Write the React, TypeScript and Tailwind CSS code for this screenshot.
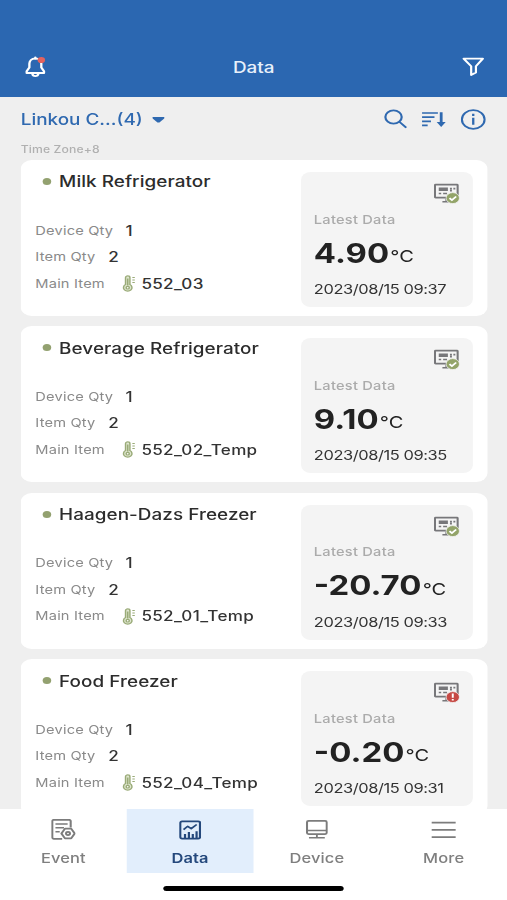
import React from 'react';

interface Location {
  name: string;
  deviceQty: number;
  itemQty: number;
  mainItem: string;
  value: string;
  time: string;
  status: 'ok' | 'alert';
}

const locations: Location[] = [
  { name: 'Milk Refrigerator', deviceQty: 1, itemQty: 2, mainItem: '552_03', value: '4.90', time: '2023/08/15 09:37', status: 'ok' },
  { name: 'Beverage Refrigerator', deviceQty: 1, itemQty: 2, mainItem: '552_02_Temp', value: '9.10', time: '2023/08/15 09:35', status: 'ok' },
  { name: 'Haagen-Dazs Freezer', deviceQty: 1, itemQty: 2, mainItem: '552_01_Temp', value: '-20.70', time: '2023/08/15 09:33', status: 'ok' },
  { name: 'Food Freezer', deviceQty: 1, itemQty: 2, mainItem: '552_04_Temp', value: '-0.20', time: '2023/08/15 09:31', status: 'alert' },
];

const BellIcon = () => (
  <svg width="18" height="22" viewBox="0 0 18 22" fill="none" stroke="#fff" strokeWidth="1.9" strokeLinecap="round" strokeLinejoin="round">
    <path d="M9 2.5c-3.2 0-4.9 2.3-4.9 5.2v3.8L1.9 15.2v1.8h14.2v-1.8l-2.2-3.7V7.7C13.9 4.8 12.2 2.5 9 2.5Z" />
    <path d="M9 1.5v1M6.5 17.6c.2 1.6 1.2 2.5 2.5 2.5s2.3-.9 2.5-2.5" />
    <circle cx="13.9" cy="4" r="3.1" fill="#e2625f" stroke="none" />
  </svg>
);

const FilterIcon = () => (
  <svg width="19" height="20" viewBox="0 0 19 20" fill="none" stroke="#fff" strokeWidth="1.8" strokeLinejoin="round">
    <path d="M1.4 1.6h15.8l-5.7 7.7v6.2l-3.9 2.5V9.3Z" />
  </svg>
);

const SearchIcon = () => (
  <svg width="19" height="20" viewBox="0 0 19 20" fill="none" stroke="#2f69b0" strokeWidth="1.8" strokeLinecap="round">
    <circle cx="7.9" cy="8" r="6.7" />
    <path d="m12.9 13 4.9 5.2" />
  </svg>
);

const SortIcon = () => (
  <svg width="20" height="17" viewBox="0 0 20 17" fill="none" stroke="#2f69b0" strokeWidth="1.7">
    <path d="M.3 2h13M.3 6.2h10.2M.3 10.3h7.300M.3 14.400h4.6" />
    <path d="M16 1.3v12" strokeWidth="2.3" />
    <path d="M12.3 11h7.400L16 15.900Z" fill="#2f69b0" stroke="none" />
  </svg>
);

const InfoIcon = () => (
  <svg width="21" height="21" viewBox="0 0 21 21" fill="none" stroke="#2f69b0" strokeWidth="1.7">
    <circle cx="10.3" cy="10.5" r="9.3" />
    <path d="M10.3 8.700v7.100M10.3 4.800v2.100" strokeWidth="1.9" />
  </svg>
);

const ThermometerIcon = () => (
  <svg width="11" height="17" viewBox="0 0 11 17" fill="none" stroke="#9aab78" strokeWidth="1.2">
    <path d="M3 9.6V2.7a1.8 1.8 0 0 1 3.6 0v6.9a3.5 3.5 0 1 1-3.6 0Z" fill="#dfe6cf" />
    <path d="M4.8 3.5v7" strokeWidth="1.3" />
    <circle cx="4.8" cy="12.7" r="1.3" fill="#fff" />
    <path d="M8.6 2.5h2M8.6 5h2M8.6 7.5h2" strokeWidth=".9" />
  </svg>
);

const StatusIcon = ({ status }: { status: Location['status'] }) => (
  <svg width="21" height="22" viewBox="0 0 21 22" fill="none">
    <rect x=".9" y="2.6" width="18.6" height="13" rx=".6" stroke="#77777a" strokeWidth="1.7" />
    <path d="M10.2 15.8v4M7 19.8h6" stroke="#77777a" strokeWidth="1.5" />
    <path d="M4 7.3h7.5" stroke="#77777a" strokeWidth="3.4" />
    <path d="M13.2 6.6h1.6M16 6.6h1.6M13.2 8.6h1.6M4 11.5h2M7.6 11.5h3.2" stroke="#77777a" strokeWidth="1.7" />
    {status === 'ok' ? (
      <>
        <circle cx="15.5" cy="16.1" r="5.5" fill="#93a469" stroke="#f5f5f5" strokeWidth=".7" />
        <path d="m12.8 16.1 2 2 3.5-3.6" stroke="#fff" strokeWidth="1.6" />
      </>
    ) : (
      <>
        <circle cx="15.5" cy="16.1" r="5.5" fill="#c64a45" stroke="#f5f5f5" strokeWidth=".7" />
        <path d="M15.5 12.6v4.2M15.5 18v1.5" stroke="#fff" strokeWidth="1.6" />
      </>
    )}
  </svg>
);

const EventIcon = () => (
  <svg width="20" height="21" viewBox="0 0 20 21" fill="none" stroke="#7c7c7c" strokeWidth="1.7" strokeLinejoin="round">
    <path d="M9 19.8H2.2A1.3 1.3 0 0 1 .9 18.5V2.1A1.3 1.3 0 0 1 2.2.8h12.5A1.3 1.3 0 0 1 16 2.1v6.5" />
    <path d="M3.5 4.9h10M3.5 8.8h7M3.5 12.7h3.5" strokeWidth="1.5" />
    <path d="M11.3 9.6h5.1l2.9 4.9-2.9 4.9h-5.1l-2.9-4.9Z" />
    <circle cx="13.8" cy="14.5" r="1.6" />
  </svg>
);

const DataIcon = () => (
  <svg width="18" height="20" viewBox="0 0 18 20" fill="none" stroke="#24487c" strokeWidth="1.8" strokeLinejoin="round">
    <rect x=".9" y="1.4" width="16.2" height="17.2" rx="1.5" />
    <path d="M3.6 9.6 7 6.300l2.900 2.400 4.500-4.200" strokeWidth="1.6" />
    <path d="M4.8 18.5v-4.500M8 18.5v-6.500M11.2 18.5V14M14.3 18.5v-7.200" />
  </svg>
);

const DeviceIcon = () => (
  <svg width="18" height="19" viewBox="0 0 18 19" fill="none" stroke="#7c7c7c" strokeWidth="1.7">
    <rect x=".9" y=".9" width="16.2" height="13.2" rx="1.3" />
    <path d="M1 10.5h16M9 14.3v3M2.5 17.8h13" strokeWidth="1.5" />
  </svg>
);

const MoreIcon = () => (
  <svg width="20" height="18" viewBox="0 0 20 18" fill="none" stroke="#7c7c7c" strokeWidth="1.7">
    <path d="M0 1.6h20M0 8.9h20M0 16.2h20" />
  </svg>
);

const tabs = [
  { label: 'Event', icon: <EventIcon />, active: false },
  { label: 'Data', icon: <DataIcon />, active: true },
  { label: 'Device', icon: <DeviceIcon />, active: false },
  { label: 'More', icon: <MoreIcon />, active: false },
];

const labelClass = 'text-[12px] tracking-[0.15px] text-[#8a8a8a]';
const valueClass = 'pb-px text-[14px] font-medium text-[#333333]';

const LocationCard = ({ location }: { location: Location }) => (
  <div className="flex h-[156px] shrink-0 justify-between rounded-[9px] bg-white pt-3 pr-[12px] pl-3">
    <div className="flex flex-col">
      <div className="flex h-5 items-center gap-[6.5px] pl-[6px]">
        <span className="mb-px size-[7px] rounded-full bg-[#93a170]" />
        <span className="text-[15.5px] font-medium tracking-[0.04px] text-[#2c2c2c]">{location.name}</span>
      </div>
      <div className="mt-[25.5px] flex h-[26px] items-center gap-[10px]">
        <span className={labelClass}>Device Qty</span>
        <span className={valueClass}>{location.deviceQty}</span>
      </div>
      <div className="flex h-[26.5px] items-center gap-[10.5px]">
        <span className={labelClass}>Item Qty</span>
        <span className={valueClass}>{location.itemQty}</span>
      </div>
      <div className="flex h-[27px] items-center">
        <span className={`${labelClass} w-[71px]`}>Main Item</span>
        <ThermometerIcon />
        <span className={`${valueClass} ml-[5px] tracking-[0.25px]`}>{location.mainItem}</span>
      </div>
    </div>
    <div className="flex h-[135px] w-[141px] flex-col rounded-[8px] bg-[#f4f4f4] pt-[10px] pl-[11px]">
      <div className="flex h-[22px] justify-end pr-[11px]">
        <StatusIcon status={location.status} />
      </div>
      <span className="mt-[6.5px] text-[12px] leading-[18px] font-medium tracking-[0.2px] text-[#ababab]">Latest Data</span>
      <div className="mt-[8px] flex h-[34px] items-center gap-[1px] leading-[34px] text-[#222222]">
        <span className="text-[27px] font-bold">{location.value}</span>
        <span className="pt-[5px] text-[16.5px]">°C</span>
      </div>
      <span className="mt-[8.5px] text-[13.5px] leading-5 tracking-[-0.35px] text-[#333333]">{location.time}</span>
    </div>
  </div>
);

export default function App() {
  return (
    <div className="h-[900px] w-[507px] overflow-hidden bg-[#efefef]">
      <div className="flex h-[900px] w-[416px] origin-top-left scale-x-[1.21875] flex-col font-['Inter',sans-serif] whitespace-nowrap">
        <header className="flex h-[97px] shrink-0 items-center justify-between bg-[#2b67b1] pt-[37px] pr-[18.5px] pl-[20px]">
          <BellIcon />
          <h1 className="pt-[2px] text-[15.5px] font-medium text-[#e8f0fa]">Data</h1>
          <FilterIcon />
        </header>
        <div className="flex h-[44px] shrink-0 items-center justify-between pr-[17px] pl-[17px] text-[#2f69b0]">
          <div className="flex items-center gap-[8px] pt-[2px]">
            <span className="text-[15.5px] font-medium">Linkou C...(4)</span>
            <svg width="10" height="6" viewBox="0 0 10 6" fill="#2f69b0">
              <path d="M0 0h10v1.200L5.800 5.600h-1.600L0 1.200Z" />
            </svg>
          </div>
          <div className="flex items-center gap-[12px] pr-[0.5px]">
            <SearchIcon />
            <SortIcon />
            <InfoIcon />
          </div>
        </div>
        <p className="h-[19px] shrink-0 pl-[17px] text-[10px] leading-[16px] font-medium tracking-[0.1px] text-[#b0b0b0]">Time Zone+8</p>
        <main className="flex min-h-0 flex-1 flex-col gap-[10.4px] overflow-hidden pr-[16.5px] pl-[17px]">
          {locations.map((location) => (
            <LocationCard key={location.name} location={location} />
          ))}
        </main>
        <nav className="h-[91px] shrink-0 bg-white">
          <div className="grid h-16 grid-cols-4">
            {tabs.map((tab) => (
              <div
                key={tab.label}
                className={`flex flex-col items-center ${tab.active ? 'bg-[#e2eefc] text-[#24487c]' : 'text-[#7f7f7f]'}`}
              >
                <div className="mt-[9px] flex h-[23px] items-center">{tab.icon}</div>
                <span className={`mt-[7px] text-[13.5px] leading-5 tracking-[0.1px] ${tab.active ? 'font-semibold' : 'font-medium'}`}>{tab.label}</span>
              </div>
            ))}
          </div>
          <div className="mx-auto mt-[13px] h-[5px] w-[148px] rounded-full bg-black" />
        </nav>
      </div>
    </div>
  );
}
